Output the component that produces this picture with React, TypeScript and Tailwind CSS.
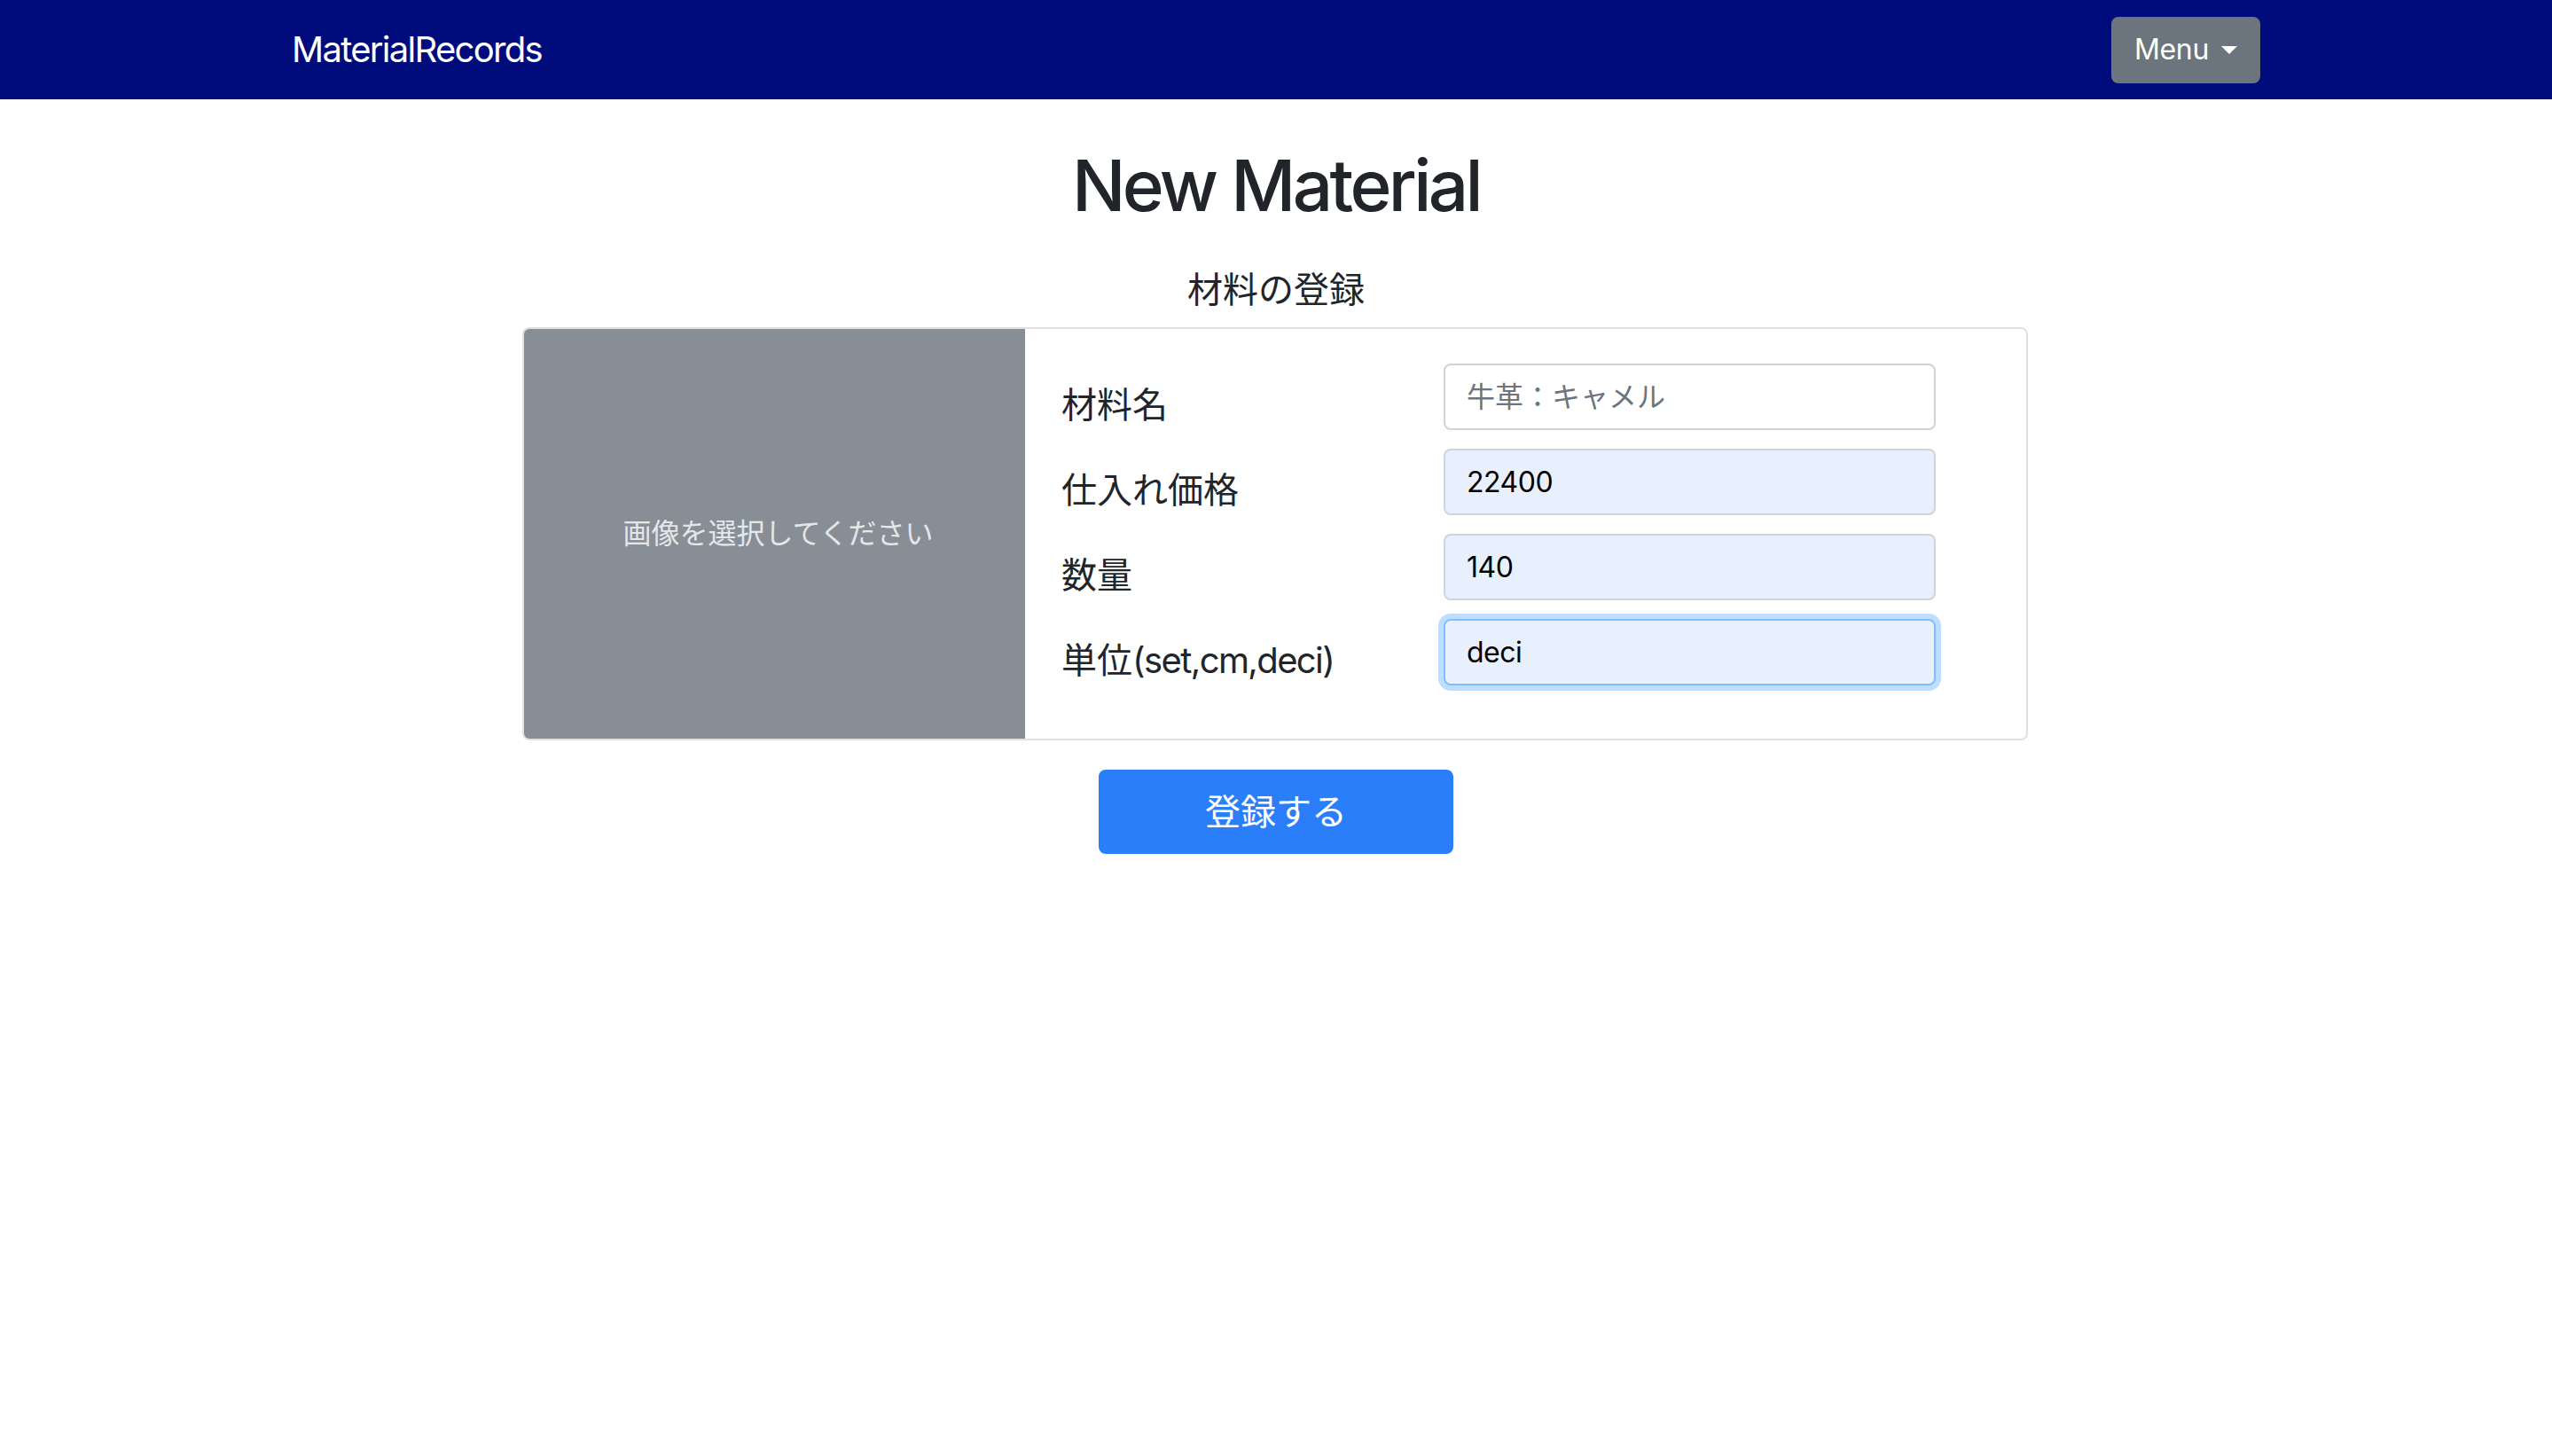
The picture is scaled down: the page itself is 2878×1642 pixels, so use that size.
import React from "react";

export default function App() {
  const font = { fontFamily: 'Inter, "Noto Sans CJK JP", sans-serif' };
  return (
    <div className="min-h-screen bg-white text-[#212529]" style={font}>
      <nav className="bg-[#000c7b] h-[112px] flex items-center">
        <div className="w-[2280px] mx-auto px-[30px] flex items-center justify-between">
          <span className="text-[40px] leading-[60px] text-white tracking-[-1.7px]">MaterialRecords</span>
          <button className="w-[168px] bg-[#6c757d] border-2 border-[#6c757d] rounded-[8px] h-[75px] text-[32px] leading-[48px] text-white flex items-center justify-center tracking-[-0.3px]">
            Menu
            <span className="ml-[14px] w-0 h-0 border-x-[9.6px] border-t-[9.6px] border-x-transparent border-t-white" />
          </button>
        </div>
      </nav>
      <main className="flex flex-col items-center">
        <h1 className="mt-[49px] text-[80px] leading-[96px] font-medium tracking-[-3.6px]">New Material</h1>
        <h5 className="mt-[40px] text-[40px] leading-[60px]">材料の登録</h5>
        <div className="mt-[12px] mr-[2px] w-[1698px] h-[466px] border-2 border-[#e0e0e0] rounded-[8px] flex overflow-hidden">
          <div className="w-[565px] bg-[#878e96] flex items-center justify-center pl-[8px]">
            <span className="text-[32px] text-[#e4e6e8]">画像を選択してください</span>
          </div>
          <div className="flex-1 pl-[41px] pt-[39px]">
            {[
              { label: "材料名", latin: "", value: "", placeholder: "牛革：キャメル", kind: "placeholder" },
              { label: "仕入れ価格", latin: "", value: "22400", kind: "auto" },
              { label: "数量", latin: "", value: "140", kind: "auto" },
              { label: "単位", latin: "(set,cm,deci)", value: "deci", kind: "focus" },
            ].map((r) => (
              <div key={r.label} className="flex items-start h-[96px]">
                <label className="w-[431px] pt-[17px] text-[40px] leading-[60px]">
                  {r.label}
                  {r.latin && <span className="tracking-[-1.6px]">{r.latin}</span>}
                </label>
                <input
                  readOnly
                  value={r.value}
                  placeholder={r.placeholder}
                  className={
                    r.kind === "placeholder"
                      ? "w-[555px] h-[75px] px-[24px] rounded-[8px] border-2 border-[#ced4da] bg-white text-[32px] text-[#212529] placeholder:text-[#6c757d] outline-none"
                      : r.kind === "focus"
                      ? "w-[555px] h-[75px] px-[24px] rounded-[8px] border-2 border-[#80bdff] bg-[#e8f0fe] text-[32px] text-black outline-none shadow-[0_0_0_6px_rgba(0,123,255,0.25)] tracking-[-0.5px]"
                      : "w-[555px] h-[75px] px-[24px] rounded-[8px] border-2 border-[#ced4da] bg-[#e8f0fe] text-[32px] text-black outline-none tracking-[-0.5px]"
                  }
                />
              </div>
            ))}
          </div>
        </div>
        <button className="mt-[33px] w-[400px] h-[95px] rounded-[8px] bg-[#2a7ef9] text-white text-[40px]">登録する</button>
      </main>
    </div>
  );
}
